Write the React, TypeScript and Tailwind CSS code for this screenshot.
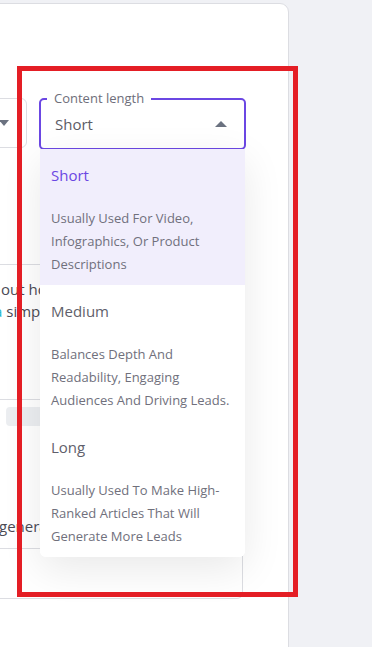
import React from "react";

type Option = {
  title: string;
  desc: string;
  active?: boolean;
};

const options: Option[] = [
  {
    title: "Short",
    desc: "Usually Used For Video, Infographics, Or Product Descriptions",
    active: true,
  },
  {
    title: "Medium",
    desc: "Balances Depth And Readability, Engaging Audiences And Driving Leads.",
  },
  {
    title: "Long",
    desc: "Usually Used To Make High-Ranked Articles That Will Generate More Leads",
  },
];

const CaretDown: React.FC = () => (
  <svg width="10" height="6" viewBox="0 0 10 6">
    <polygon points="0,0 10,0 5,6" fill="#6b7280" />
  </svg>
);

const CaretUp: React.FC = () => (
  <svg width="12" height="6" viewBox="0 0 12 6">
    <polygon points="0,6 12,6 6,0" fill="#6b7280" />
  </svg>
);

const App: React.FC = () => {
  return (
    <div
      className="relative w-[372px] h-[647px] overflow-hidden bg-[#f0f1f5]"
      style={{ fontFamily: '"Open Sans", "Liberation Sans", sans-serif' }}
    >
      <div className="pt-[3px]">
        {/* card, left edge runs off screen */}
        <div className="-ml-4 w-[305px] h-[660px] bg-white border border-[#dcdde2] rounded-tr-[9px]">
          <div className="pt-[94px] flex gap-3">
            {/* cut off select */}
            <div className="w-[42px] h-[50px] border border-[#dcdde2] rounded-md flex items-center justify-end pr-[17px]">
              <CaretDown />
            </div>

            {/* content length select */}
            <div className="relative w-[207px] h-[52px] border-2 border-[#6b47e3] rounded-[5px] flex items-center justify-between pl-[14px] pr-[17px]">
              <span className="absolute -top-[11px] left-[6px] px-[7px] bg-white text-[13px] leading-[18px] text-[#6e6e7a]">
                Content length
              </span>
              <span className="text-[15px] text-[#5c5c66]">Short</span>
              <CaretUp />

              {/* dropdown */}
              <div className="absolute top-[calc(100%+1px)] -left-px -right-px z-10 bg-white rounded-b-md shadow-[0_12px_40px_rgba(0,0,0,0.09)] overflow-hidden">
                {options.map((o) => (
                  <div
                    key={o.title}
                    className={`pl-[11px] pr-3 pt-[13px] pb-[9px] ${o.active ? "bg-[#f1eefc]" : "bg-white"}`}
                  >
                    <div
                      className={`text-[15px] leading-[26px] ${o.active ? "text-[#6b47e3]" : "text-[#5f5f6b]"}`}
                    >
                      {o.title}
                    </div>
                    <div className="mt-[19px] text-[13px] leading-[23px] text-[#70707c]">
                      {o.desc}
                    </div>
                  </div>
                ))}
              </div>
            </div>
          </div>

          {/* editor box behind the dropdown */}
          <div className="mt-[114px] w-[258px] h-[335px] border border-[#dcdde2] rounded-md flex flex-col">
            <div className="h-[134px] pt-[13px] w-[56px] text-[15px] leading-[22px] text-[#4b4b55] whitespace-nowrap overflow-hidden">
              <div className="pl-[15px]">out how</div>
              <div className="pl-[8px]">
                <span className="text-[#22b8cf]">a</span> simple
              </div>
            </div>
            <div className="flex-1 border-t border-[#dcdde2] flex flex-col justify-between pb-[11px]">
              <div className="mt-[7px] ml-[20px] w-[160px] h-[19px] bg-[#eceef1] rounded-sm" />
              <div className="w-[56px] pl-[13px] text-[15px] leading-[22px] text-[#4b4b55] whitespace-nowrap overflow-hidden">
                generate
              </div>
            </div>
            <div className="h-[50px] border-t border-[#dcdde2]" />
          </div>
        </div>
      </div>

      {/* red annotation frame */}
      <div className="absolute left-[17px] top-[66px] w-[281px] h-[531px] border-[5px] border-[#e41e25] pointer-events-none z-20" />
    </div>
  );
};

export default App;
